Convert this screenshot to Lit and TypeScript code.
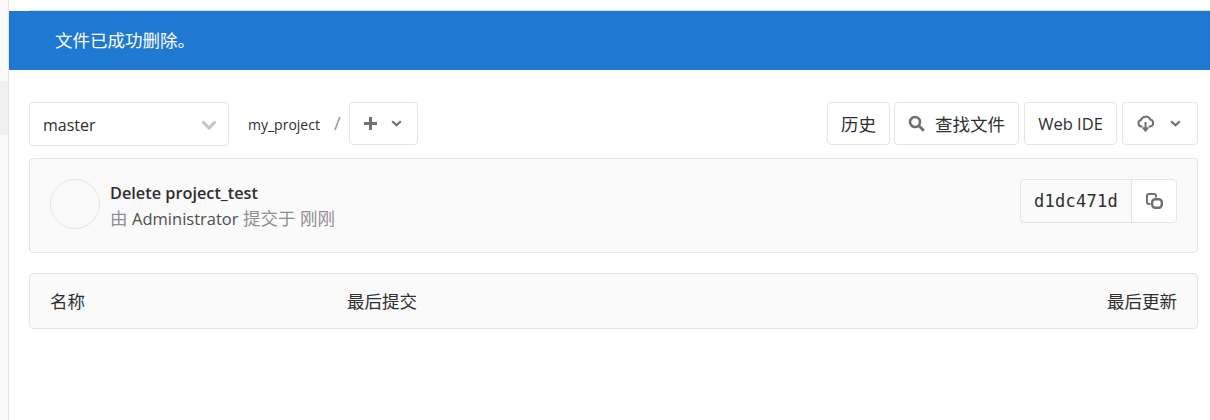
import { LitElement, html, css } from 'lit';
import { customElement } from 'lit/decorators.js';

const chevron = html`<svg class="chev" width="11" height="7" viewBox="0 0 11 7"><path d="M1.2 1.2 5.500 5.300l4.300-4.100" fill="none" stroke="#707070" stroke-width="2.200"/></svg>`;

@customElement('app-root')
export class AppRoot extends LitElement {
  static styles = css`
    :host {
      display: block;
      height: 420px;
      overflow: hidden;
      background: #fff;
      font-family: "Open Sans", "Noto Sans CJK SC", sans-serif;
      font-size: 17.5px;
      color: #2e2e2e;
    }

    .page {
      display: flex;
      height: 420px;
    }

    .side {
      width: 9px;
      box-sizing: border-box;
      background: #fafafa;
      border-right: 1px solid #e5e5e5;
      flex-shrink: 0;
    }

    .side-active {
      height: 54px;
      margin-top: 81px;
      background: #f0f0f0;
    }

    .main {
      flex: 1;
      min-width: 0;
      padding-top: 10px;
    }

    .topline {
      height: 1px;
      margin-left: 20px;
      background: #d8d8d8;
    }

    .flash {
      box-sizing: border-box;
      height: 59px;
      background: #1f78d1;
      color: #fff;
      display: flex;
      align-items: center;
      padding: 0 0 2px 46px;
    }

    .content {
      padding: 32px 12px 0 20px;
    }

    .toolbar {
      display: flex;
      align-items: flex-start;
      height: 44px;
    }

    .btn {
      display: flex;
      align-items: center;
      justify-content: center;
      box-sizing: border-box;
      height: 43px;
      border: 1px solid #e5e5e5;
      border-radius: 4px;
      background: #fff;
    }

    .lat {
      font-size: 16.500px;
    }

    .branch {
      width: 200px;
      height: 44px;
      justify-content: space-between;
      padding: 1px 11px 0 13px;
      font-size: 16px;
    }

    .crumb {
      margin-left: 19px;
      font-size: 14px;
      line-height: 46px;
    }

    .slash {
      margin: 0 8px 0 14px;
      font-size: 18px;
      line-height: 42px;
      color: #8f8f8f;
    }

    .add {
      width: 69px;
      gap: 14px;
      padding-right: 1px;
    }

    .spacer {
      flex: 1;
    }

    .actions {
      display: flex;
      gap: 4px;
    }

    .history {
      width: 63px;
    }

    .find {
      width: 125px;
      gap: 10px;
    }

    .ide {
      width: 93px;
      margin: 0 1px;
    }

    .download {
      width: 76px;
      gap: 16px;
      padding-right: 3px;
    }

    .commit {
      display: flex;
      align-items: flex-start;
      box-sizing: border-box;
      height: 95px;
      margin-top: 12px;
      padding: 20px 20px 0;
      border: 1px solid #e5e5e5;
      border-radius: 4px;
      background: #fafafa;
    }

    .avatar {
      box-sizing: border-box;
      width: 50px;
      height: 50px;
      border: 1px solid #e5e5e5;
      border-radius: 50%;
      margin-right: 10px;
    }

    .info {
      flex: 1;
      padding-top: 1px;
    }

    .title {
      font-weight: 600;
      font-size: 16.300px;
      line-height: 26px;
    }

    .meta {
      line-height: 25px;
      color: #8f8f8f;
    }

    .meta .lat {
      color: #4f4f4f;
    }

    .sha {
      display: flex;
      box-sizing: border-box;
      width: 157px;
      height: 44px;
      border: 1px solid #e5e5e5;
      border-radius: 4px;
    }

    .sha-text {
      flex: 1;
      display: flex;
      align-items: center;
      justify-content: center;
      font-family: "DejaVu Sans Mono", monospace;
      font-size: 17px;
      letter-spacing: 0.25px;
    }

    .sha-copy {
      width: 44px;
      display: flex;
      align-items: center;
      justify-content: center;
      background: #fff;
      border-left: 1px solid #e5e5e5;
      border-radius: 0 4px 4px 0;
    }

    .table-head {
      display: grid;
      grid-template-columns: 297px 1fr auto;
      align-items: center;
      box-sizing: border-box;
      height: 56px;
      margin-top: 20px;
      padding: 0 20px 2px;
      border: 1px solid #e5e5e5;
      border-radius: 4px;
      background: #fafafa;
    }
  `;

  render() {
    return html`
      <div class="page">
        <div class="side"><div class="side-active"></div></div>
        <div class="main">
          <div class="topline"></div>
          <div class="flash">文件已成功删除。</div>
          <div class="content">
            <div class="toolbar">
              <div class="btn branch">
                <span>master</span>
                <svg width="16" height="10" viewBox="0 0 16 10"><path d="M1.500 1.500 8 8l6.500-6.500" fill="none" stroke="#c4c4c4" stroke-width="3"/></svg>
              </div>
              <span class="crumb">my_project</span>
              <span class="slash">/</span>
              <div class="btn add">
                <svg width="13" height="13" viewBox="0 0 13 13"><path d="M6.500 0v13M0 6.500h13" stroke="#707070" stroke-width="3"/></svg>
                ${chevron}
              </div>
              <div class="spacer"></div>
              <div class="actions">
                <div class="btn history">历史</div>
                <div class="btn find">
                  <svg width="17" height="17" viewBox="0 0 17 17"><circle cx="7" cy="7" r="5" fill="none" stroke="#707070" stroke-width="2.600"/><path d="m10.800 10.800 5 5" stroke="#707070" stroke-width="3"/></svg>
                  <span>查找文件</span>
                </div>
                <div class="btn ide"><span class="lat">Web IDE</span></div>
                <div class="btn download">
                  <svg width="17" height="17" viewBox="0 0 17 17"><path d="M5.500 11.500H4.300A3.300 3.300 0 0 1 4 5a5 5 0 0 1 9.300-.4A3.500 3.500 0 0 1 13.300 11.500H11.500" fill="none" stroke="#707070" stroke-width="2"/><path d="M8.500 7v8M6 12.500l2.500 3 2.500-3" fill="none" stroke="#707070" stroke-width="2"/></svg>
                  ${chevron}
                </div>
              </div>
            </div>

            <div class="commit">
              <div class="avatar"></div>
              <div class="info">
                <div class="title">Delete project_test</div>
                <div class="meta">由 <span class="lat">Administrator</span> 提交于 刚刚</div>
              </div>
              <div class="sha">
                <div class="sha-text">d1dc471d</div>
                <div class="sha-copy">
                  <svg width="17" height="16" viewBox="0 0 17 16"><path d="M4.500 11H3a2 2 0 0 1-2-2V3a2 2 0 0 1 2-2h5a2 2 0 0 1 2 2v1.500" fill="none" stroke="#707070" stroke-width="2"/><rect x="6.200" y="6.200" width="9.600" height="8.600" rx="3" fill="none" stroke="#707070" stroke-width="2.400"/></svg>
                </div>
              </div>
            </div>

            <div class="table-head">
              <span>名称</span>
              <span>最后提交</span>
              <span>最后更新</span>
            </div>
          </div>
        </div>
      </div>
    `;
  }
}
